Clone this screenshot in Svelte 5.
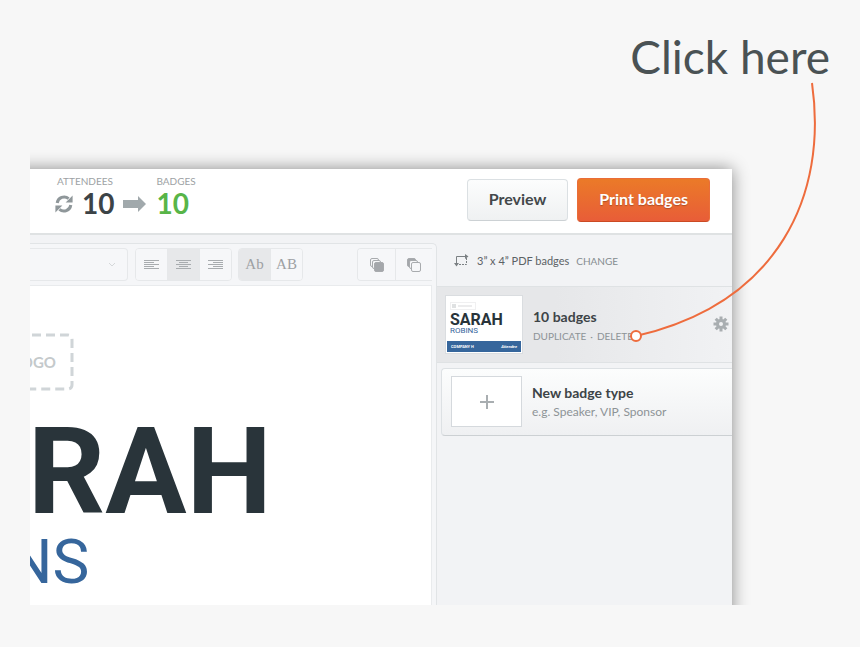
<script>
    let attendees = 10
    let badges = 10

    let align = 'center'
    let letterCase = 'mixed'

    const alignments = [
        { name: 'left', lines: ['M0 1h15', 'M0 3h10', 'M0 5h15', 'M0 7h10', 'M0 9h15'] },
        { name: 'center', lines: ['M0 1h15', 'M3 3h9', 'M0 5h15', 'M3 7h9', 'M0 9h15'] },
        { name: 'right', lines: ['M0 1h15', 'M5 3h10', 'M0 5h15', 'M5 7h10', 'M0 9h15'] }
    ]

    const cases = [
        { name: 'mixed', label: 'Ab' },
        { name: 'upper', label: 'AB' }
    ]
</script>

<main>
    <h1>Click here</h1>

    <div class="panel">
        <header>
            <div class="stat">
                <span class="stat-label">ATTENDEES</span>
                <div class="stat-row">
                    <svg class="refresh" width="18" height="18" viewBox="0 0 18 18">
                        <path d="M2.2 8A7 7 0 0 1 13.6 3.6" />
                        <path d="M15.8 10A7 7 0 0 1 4.4 14.4" />
                        <path class="tip" d="M17.6 0.6V7.6H10.6ZM0.4 17.4V10.4H7.4Z" />
                    </svg>
                    <strong>{attendees}</strong>
                    <svg class="arrow" width="24" height="16" viewBox="0 0 24 16">
                        <path d="M0 4h15V0l8 8-8 8v-4H0z" />
                    </svg>
                </div>
            </div>
            <div class="stat">
                <span class="stat-label">BADGES</span>
                <div class="stat-row"><strong class="green">{badges}</strong></div>
            </div>
            <div class="actions">
                <button class="preview" type="button">Preview</button>
                <button class="print" type="button">Print badges</button>
            </div>
        </header>

        <div class="workspace">
            <section class="editor">
                <div class="toolbar">
                    <button class="dropdown" type="button" aria-label="Font">
                        <svg width="8" height="6" viewBox="0 0 8 6"><path d="M1 1l3 3 3-3" /></svg>
                    </button>
                    <div class="group">
                        {#each alignments as item}
                            <button type="button" class:active={align === item.name} aria-label="Align {item.name}" on:click={() => align = item.name}>
                                <svg width="15" height="10" viewBox="0 0.5 15 10">
                                    {#each item.lines as d}<path {d} />{/each}
                                </svg>
                            </button>
                        {/each}
                    </div>
                    <div class="group case">
                        {#each cases as item}
                            <button type="button" class:active={letterCase === item.name} on:click={() => letterCase = item.name}>{item.label}</button>
                        {/each}
                    </div>
                    <div class="group layers">
                        <button type="button" aria-label="Bring to front">
                            <svg width="16" height="16" viewBox="0 0 16 16">
                                <rect x="1.5" y="1.5" width="8" height="8" rx="1.5" />
                                <rect x="3.5" y="3.5" width="8" height="8" rx="1.5" />
                                <rect class="solid" x="5.5" y="5.5" width="9" height="9" rx="1.5" />
                            </svg>
                        </button>
                        <button type="button" aria-label="Send to back">
                            <svg width="16" height="16" viewBox="0 0 16 16">
                                <rect class="solid" x="1.5" y="1.5" width="8" height="8" rx="1.5" />
                                <rect x="3.5" y="3.5" width="8" height="8" rx="1.5" />
                                <rect x="5.5" y="5.5" width="9" height="9" rx="1.5" />
                            </svg>
                        </button>
                    </div>
                </div>
                <div class="canvas">
                    <div class="badge">
                        <div class="logo">
                            <span>YOUR LOGO</span>
                            <svg width="100%" height="100%"><rect x="2" y="2" rx="4" /></svg>
                        </div>
                        <div class="first-name">SARAH</div>
                        <div class="last-name">ROBINS</div>
                    </div>
                </div>
            </section>

            <aside>
                <div class="size">
                    <svg width="15" height="13" viewBox="0 0 15 13">
                        <path d="M2.5 11V2.5H12" />
                        <path class="dots" d="M12.5 4V10.5H4" />
                        <path class="tip" d="M11 0l3.5 2.5L11 5zM0 9h5l-2.5 3.5z" />
                    </svg>
                    <span>3” x 4” PDF badges</span>
                    <a href="#change">CHANGE</a>
                </div>

                <div class="type selected">
                    <div class="thumb">
                        <div class="thumb-logo"><i></i><b></b></div>
                        <div class="thumb-first">SARAH</div>
                        <div class="thumb-last">ROBINS</div>
                        <div class="thumb-foot"><span>COMPANY H</span><em>Attendee</em></div>
                    </div>
                    <div class="info">
                        <h2>{badges} badges</h2>
                        <p class="links"><a href="#duplicate">DUPLICATE</a><span>·</span><a href="#delete">DELETE</a></p>
                    </div>
                    <button class="gear" type="button" aria-label="Settings">
                        <svg width="16" height="16" viewBox="-8 -8 16 16">
                            {#each [0, 45, 90, 135] as angle}
                                <path d="M0 -7.5V-4M0 4V7.5" transform="rotate({angle})" />
                            {/each}
                            <circle r="3.5" />
                        </svg>
                    </button>
                </div>

                <div class="type new">
                    <button class="plus" type="button" aria-label="Add badge type">
                        <svg width="14" height="14" viewBox="0 0 14 14"><path d="M7 0V14M0 7H14" /></svg>
                    </button>
                    <div class="info">
                        <h2>New badge type</h2>
                        <p class="hint">e.g. Speaker, VIP, Sponsor</p>
                    </div>
                </div>
            </aside>
        </div>
    </div>

    <svg class="pointer" width="200" height="270" viewBox="630 80 200 270">
        <path d="M812 83C828 195 779 303 636 336" />
        <circle cx="636" cy="336" r="5" />
    </svg>
</main>

<style>
    :global(body) {
        margin: 0;
        background: #f7f7f7;
    }

    main {
        position: relative;
        padding: 29px 30px 22px;
        font-family: Lato, "Open Sans", sans-serif;
        color: #3d4447;
    }

    h1, h2, p {
        margin: 0;
    }

    h1 {
        font-size: 46px;
        font-weight: 400;
        line-height: 56px;
        text-align: right;
        color: #4a5254;
    }

    button {
        font-family: inherit;
        cursor: pointer;
    }

    svg {
        display: block;
        fill: none;
    }

    a {
        color: inherit;
        text-decoration: none;
    }

    /* the left and bottom sides are cut straight, shadow and all */
    .panel {
        margin: 84px 98px 0 -20px;
        padding: 0 0 20px 20px;
        background: #fff;
        box-shadow: 0 0 16px rgba(0, 0, 0, 0.45);
        clip-path: inset(-20px -20px 20px 20px);
    }

    header {
        display: flex;
        box-sizing: border-box;
        height: 66px;
        padding: 5px 22px 0 25px;
        border-bottom: 2px solid #dfe2e3;
    }

    .stat-label {
        display: block;
        margin-left: 2px;
        font-size: 10px;
        line-height: 14px;
        color: #9da2a4;
    }

    .stat-row {
        display: flex;
        align-items: center;
        gap: 9px;
        height: 32px;
        margin-right: 7px;
    }

    .stat-row strong {
        font-size: 28px;
        font-weight: 700;
        line-height: 30px;
        padding-bottom: 2px;
        color: #3c4347;
    }

    .stat-row .green {
        margin-left: 2px;
        color: #58b548;
    }

    .refresh {
        stroke: #8f979a;
        stroke-width: 3;
    }

    .refresh .tip {
        fill: #8f979a;
        stroke: none;
    }

    .arrow {
        fill: #a1a9ac;
    }

    .actions {
        display: flex;
        align-items: flex-start;
        gap: 9px;
        margin: 4px 0 0 auto;
    }

    .actions button {
        box-sizing: border-box;
        padding: 0 21px 3px;
        border-radius: 4px;
        font-size: 16px;
        font-weight: 700;
    }

    .actions .preview {
        height: 42px;
        margin-top: 1px;
        border: 1px solid #dbe0e3;
        border-bottom-color: #ccd1d4;
        background: linear-gradient(#fcfdfd, #eff1f2);
        color: #43484b;
    }

    .actions .print {
        height: 44px;
        border: 1px solid #ea6d38;
        border-bottom-color: #cb4a24;
        background: linear-gradient(#eb7a28, #e85d38);
        color: #fff;
        text-shadow: 0 1px 1px rgba(0, 0, 0, 0.25);
    }

    .workspace {
        display: flex;
        height: 370px;
        background: #f2f3f5;
    }

    .editor {
        box-sizing: border-box;
        flex: 1;
        display: flex;
        flex-direction: column;
        min-width: 0;
        margin-top: 8px;
        padding-right: 4px;
        border: solid #e1e4e6;
        border-width: 1px 1px 0 0;
        border-radius: 0 5px 0 0;
        background: #f5f6f8;
    }

    .toolbar {
        display: flex;
        height: 33px;
        padding: 4px 0;
    }

    .toolbar button {
        display: flex;
        align-items: center;
        justify-content: center;
        box-sizing: border-box;
        padding: 0;
        border: 0;
        background: #f6f7f9;
        stroke: #a8acaf;
    }

    .toolbar .dropdown {
        flex: 1;
        justify-content: flex-end;
        padding-right: 11px;
        border: solid #e6e8ea;
        border-width: 1px 1px 1px 0;
        border-radius: 0 4px 4px 0;
        stroke: #d5d8da;
    }

    .group {
        display: flex;
        margin-left: 7px;
        border: 1px solid #e6e8ea;
        border-radius: 4px;
        overflow: hidden;
    }

    .group button {
        width: 31px;
    }

    .group button + button {
        width: 32px;
        border-left: 1px solid #e6e8ea;
    }

    .toolbar .active {
        background: #e7e8ea;
    }

    .group.case {
        margin-left: 6px;
    }

    .case button {
        font-family: "Liberation Serif", serif;
        font-size: 15px;
        color: #9da0a3;
    }

    .group.layers {
        margin-left: 54px;
        border-right: 0;
        border-radius: 4px 0 0 4px;
    }

    .layers button, .layers button + button {
        width: 37px;
    }

    .layers rect {
        fill: #f6f7f9;
        stroke: #a8abae;
    }

    .layers .solid {
        fill: #a4a7ab;
    }

    .canvas {
        flex: 1;
        border: solid #e9ebed;
        border-width: 1px 1px 0 0;
        background: #fff;
    }

    /* the badge is scrolled part way out of the left edge */
    .badge {
        width: max-content;
        margin: 47px 0 0 -158px;
        font-family: Roboto, sans-serif;
        white-space: nowrap;
    }

    .logo {
        position: relative;
        display: flex;
        align-items: center;
        justify-content: flex-end;
        box-sizing: border-box;
        width: 202px;
        height: 58px;
        padding-right: 18px;
        font-family: Lato, sans-serif;
        font-size: 15px;
        font-weight: 700;
        color: #c4c9cb;
    }

    .logo svg {
        position: absolute;
        inset: 0;
    }

    .logo rect {
        width: calc(100% - 4px);
        height: calc(100% - 4px);
        stroke: #d0d5d8;
        stroke-width: 3;
        stroke-dasharray: 9 5;
    }

    .first-name {
        margin-top: 16px;
        font-size: 121px;
        font-weight: 700;
        line-height: 130px;
        color: #29343a;
    }

    .last-name {
        font-size: 62px;
        line-height: 50px;
        color: #36669c;
    }

    aside {
        width: 295px;
    }

    .size {
        display: flex;
        align-items: center;
        height: 51px;
        padding-left: 17px;
        font-size: 11px;
        color: #5c6265;
    }

    .size svg {
        margin-right: 8px;
        stroke: #7b8083;
    }

    .size .tip {
        fill: #7b8083;
        stroke: none;
    }

    .size .dots {
        stroke-dasharray: 2 1;
    }

    .size a {
        margin-left: 7px;
        font-size: 10px;
        color: #858c8f;
    }

    .type {
        display: flex;
        box-sizing: border-box;
    }

    .selected {
        height: 77px;
        padding: 8px 3px 0 8px;
        border: solid #dfe2e4;
        border-width: 1px 0;
        background: linear-gradient(90deg, #e6e7e9 40%, #f1f2f4);
    }

    .thumb {
        display: flex;
        flex-direction: column;
        box-sizing: border-box;
        width: 78px;
        height: 59px;
        border: 1px solid #dadde0;
        background: #fff;
        font-family: Roboto, sans-serif;
        line-height: 1;
    }

    .thumb-logo {
        display: flex;
        align-items: center;
        gap: 2px;
        width: 22px;
        margin: 6px 0 0 4px;
        padding: 1px;
        border: 1px solid #f0f0f1;
    }

    .thumb-logo i {
        width: 4px;
        height: 4px;
        background: #dfe1e2;
    }

    .thumb-logo b {
        width: 14px;
        height: 2px;
        background: #ececed;
    }

    .thumb-first {
        margin: 2px 0 0 4px;
        font-size: 16px;
        font-weight: 700;
        line-height: 15px;
        color: #29343a;
    }

    .thumb-last {
        margin-left: 4px;
        font-size: 8px;
        color: #36669c;
    }

    .thumb-foot {
        display: flex;
        align-items: center;
        justify-content: space-between;
        height: 11px;
        margin: auto 1px 1px;
        padding: 0 4px;
        background: #36669c;
        font-size: 4px;
        font-weight: 700;
        color: #fff;
    }

    .info {
        flex: 1;
        margin-left: 10px;
        padding-top: 12px;
    }

    .info h2 {
        font-size: 14px;
        font-weight: 700;
        line-height: 20px;
    }

    .info p {
        font-size: 10px;
        line-height: 18px;
        color: #8d9396;
    }

    .info .hint {
        font-size: 12px;
    }

    .links span {
        margin: 0 4px;
    }

    .gear {
        align-self: flex-start;
        margin-top: 21px;
        padding: 0;
        border: 0;
        background: none;
        stroke: #a9aeb1;
        stroke-width: 3;
    }

    .new {
        height: 68px;
        margin: 5px 0 0 4px;
        padding: 7px 0 0 9px;
        border: solid #dde1e4;
        border-width: 1px 0 1px 1px;
        border-bottom-color: #ccd0d3;
        border-radius: 4px 0 0 4px;
        background: linear-gradient(#fcfdfd, #eff0f2);
    }

    .plus {
        display: flex;
        align-items: center;
        justify-content: center;
        box-sizing: border-box;
        width: 71px;
        height: 51px;
        border: 1px solid #d5d9dd;
        background: #fff;
        stroke: #a9aeb1;
        stroke-width: 2;
    }

    .new .info {
        padding-top: 7px;
    }

    .pointer {
        position: absolute;
        top: 80px;
        right: 30px;
        pointer-events: none;
        stroke: #ee6c3d;
        stroke-width: 2;
    }

    .pointer circle {
        fill: #fff;
    }
</style>
